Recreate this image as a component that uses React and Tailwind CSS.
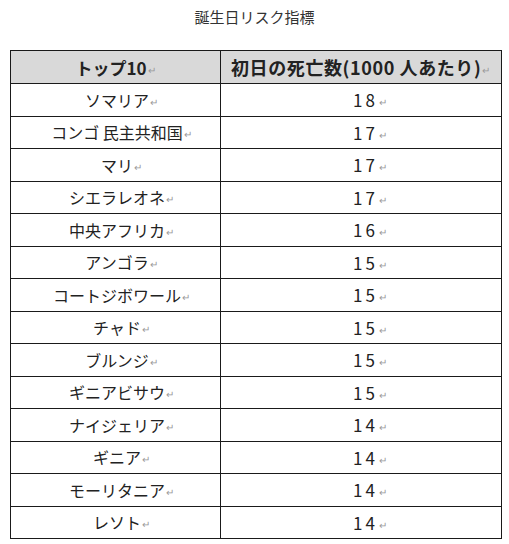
import React from "react";

const rows = [
  ["ソマリア", "18"],
  ["コンゴ 民主共和国", "17"],
  ["マリ", "17"],
  ["シエラレオネ", "17"],
  ["中央アフリカ", "16"],
  ["アンゴラ", "15"],
  ["コートジボワール", "15"],
  ["チャド", "15"],
  ["ブルンジ", "15"],
  ["ギニアビサウ", "15"],
  ["ナイジェリア", "14"],
  ["ギニア", "14"],
  ["モーリタニア", "14"],
  ["レソト", "14"],
];

function Mark() {
  return <span className="text-[10px] text-[#9a9a9a] font-normal tracking-normal ml-[1px] align-[1px]">↵</span>;
}

export default function App() {
  return (
    <div
      className="w-[509px] h-[544px] bg-white text-[#222]"
      style={{ fontFamily: '"Noto Sans CJK JP", "Noto Sans", sans-serif' }}
    >
      <div className="pt-[7px] h-[50px] text-center text-[15px] leading-[20px] text-[#333]">
        誕生日リスク指標
      </div>
      <table className="ml-[10px] w-[492px] border-collapse table-fixed">
        <colgroup>
          <col className="w-[210px]" />
          <col />
        </colgroup>
        <thead>
          <tr className="h-[33px] bg-[#d9d9d9]">
            <th className="border border-[#1a1a1a] p-0 text-[17px] font-bold leading-none text-center">
              トップ10<Mark />
            </th>
            <th className="border border-[#1a1a1a] p-0 pl-[10px] text-[18px] font-bold leading-none text-left whitespace-nowrap tracking-[0.6px] overflow-hidden">
              初日の死亡数(1000 人あたり)<Mark />
            </th>
          </tr>
        </thead>
        <tbody>
          {rows.map(([c, n]) => (
            <tr key={c} className="h-[32.5px]">
              <td className="border border-[#1a1a1a] p-0 pl-[12px] text-[16px] leading-none text-center">
                {c}
                <Mark />
              </td>
              <td className="border border-[#1a1a1a] p-0 pl-[18px] text-[17px] leading-none text-center tracking-[3px]">
                {n}
                <Mark />
              </td>
            </tr>
          ))}
        </tbody>
      </table>
    </div>
  );
}
